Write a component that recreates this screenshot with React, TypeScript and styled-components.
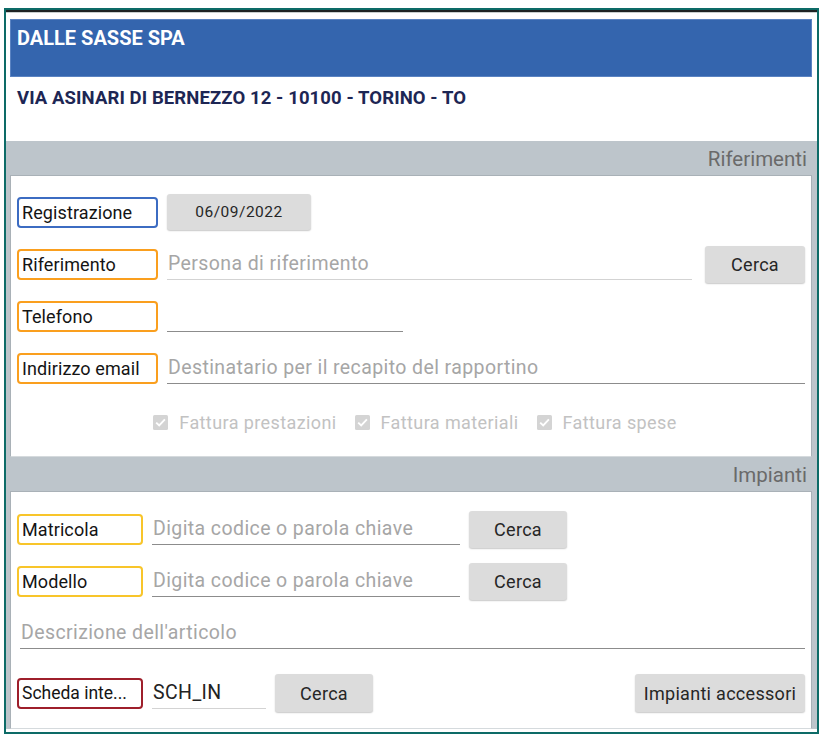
import React from 'react';
import styled, {createGlobalStyle} from "styled-components";

const GlobalStyle = createGlobalStyle`
    html, body {
        margin: 0;
        padding: 0;
        background: #ffffff;
        font-family: Roboto, "Noto Sans", "Liberation Sans", sans-serif;
    }
`;

type Tone = 'blue' | 'orange' | 'yellow' | 'red';

const toneColors: Record<Tone, string> = {
    blue: '#3c6cc2',
    orange: '#fa9f1e',
    yellow: '#f8c52a',
    red: '#9e1f2b',
};

function App() {
    return (
        <>
            <GlobalStyle/>
            <Frame>
                <TopRule/>
                <CompanyBar>DALLE SASSE SPA</CompanyBar>
                <Address>VIA ASINARI DI BERNEZZO 12 - 10100 - TORINO - TO</Address>

                <Section>
                    <SectionTitle>Riferimenti</SectionTitle>
                    <Card $paddingTop={10} $paddingBottom={6}>
                        <Row>
                            <FieldLabel $tone="blue" $width={141}>Registrazione</FieldLabel>
                            <GreyButton $width={144} $height={36} $small>06/09/2022</GreyButton>
                        </Row>
                        <Row>
                            <FieldLabel $tone="orange" $width={141}>Riferimento</FieldLabel>
                            <Input $light placeholder="Persona di riferimento"/>
                            <GreyButton $width={100} $height={37} $gapLeft={13}>Cerca</GreyButton>
                        </Row>
                        <Row>
                            <FieldLabel $tone="orange" $width={141}>Telefono</FieldLabel>
                            <Input $width={236}/>
                        </Row>
                        <Row>
                            <FieldLabel $tone="orange" $width={141}>Indirizzo email</FieldLabel>
                            <Input placeholder="Destinatario per il recapito del rapportino"/>
                        </Row>
                        <CheckRow>
                            <CheckItem><CheckBox/>Fattura prestazioni</CheckItem>
                            <CheckItem><CheckBox/>Fattura materiali</CheckItem>
                            <CheckItem><CheckBox/>Fattura spese</CheckItem>
                        </CheckRow>
                    </Card>
                </Section>

                <Section>
                    <SectionTitle>Impianti</SectionTitle>
                    <Card $paddingTop={11} $paddingBottom={9}>
                        <Row>
                            <FieldLabel $tone="yellow" $width={126}>Matricola</FieldLabel>
                            <Input $width={308} placeholder="Digita codice o parola chiave"/>
                            <GreyButton $width={98} $height={37}>Cerca</GreyButton>
                        </Row>
                        <Row>
                            <FieldLabel $tone="yellow" $width={126}>Modello</FieldLabel>
                            <Input $width={308} placeholder="Digita codice o parola chiave"/>
                            <GreyButton $width={98} $height={37}>Cerca</GreyButton>
                        </Row>
                        <Row $indent={3}>
                            <Input placeholder="Descrizione dell'articolo"/>
                        </Row>
                        <Row $top={8}>
                            <FieldLabel $tone="red" $width={126} $small>Scheda inte...</FieldLabel>
                            <Input $light $width={114} defaultValue="SCH_IN"/>
                            <GreyButton $width={98} $height={38}>Cerca</GreyButton>
                            <Spacer/>
                            <GreyButton $width={170} $height={38}>Impianti accessori</GreyButton>
                        </Row>
                    </Card>
                </Section>
            </Frame>
        </>
    );
}

const Frame = styled.div`
    box-sizing: border-box;
    margin: 8px 0 0 4px;
    width: 815px;
    height: 726px;
    border: 2px solid #0d6b67;
    display: flex;
    flex-direction: column;
    background: #ffffff;
    overflow: hidden;
`;

const TopRule = styled.div`
    height: 2px;
    background: #1e2324;
    border-bottom: 1px solid #c9cfcf;
    margin-bottom: 6px;
`;

const CompanyBar = styled.div`
    box-sizing: border-box;
    margin: 0 5px 0 4px;
    height: 58px;
    background: #3465ae;
    color: #ffffff;
    font-weight: 700;
    font-size: 20px;
    line-height: 24px;
    padding: 6px 0 0 6px;
    border: 1px solid #5a83c2;
`;

const Address = styled.div`
    height: 64px;
    padding: 10px 0 0 11px;
    box-sizing: border-box;
    color: #1d2654;
    font-weight: 700;
    font-size: 18.5px;
    line-height: 22px;
    letter-spacing: 0.1px;
`;

const Section = styled.section`
    background: #bdc5cb;
    padding: 0 5px 0 4px;
    display: flex;
    flex-direction: column;
`;

const SectionTitle = styled.div`
    height: 34px;
    display: flex;
    align-items: center;
    justify-content: flex-end;
    padding: 1px 5px 0 0;
    box-sizing: border-box;
    color: #6a6a6a;
    font-size: 20.5px;
`;

const Card = styled.div<{ $paddingTop: number, $paddingBottom: number }>`
    background: #ffffff;
    border: 1px solid #a9b1b7;
    border-bottom-color: #d5dadd;
    padding: ${(p) => p.$paddingTop}px 6px ${(p) => p.$paddingBottom}px 6px;
    display: flex;
    flex-direction: column;
`;

const Row = styled.div<{ $indent?: number, $top?: number }>`
    height: 52px;
    display: flex;
    align-items: center;
    gap: 9px;
    padding-left: ${(p) => p.$indent ?? 0}px;
    margin-top: ${(p) => p.$top ?? 0}px;
`;

const FieldLabel = styled.div<{ $tone: Tone, $width: number, $small?: boolean }>`
    box-sizing: border-box;
    flex: none;
    width: ${(p) => p.$width}px;
    height: 31px;
    border: 2px solid ${(p) => toneColors[p.$tone]};
    border-radius: 4px;
    display: flex;
    align-items: center;
    padding-left: 3px;
    color: #141414;
    font-size: ${(p) => p.$small ? 17.5 : 18}px;
    letter-spacing: ${(p) => p.$small ? 0 : 0.1}px;
    white-space: nowrap;
    overflow: hidden;
`;

const Input = styled.input<{ $width?: number, $light?: boolean }>`
    box-sizing: border-box;
    ${(p) => p.$width ? `width: ${p.$width}px; flex: none;` : 'flex: 1; min-width: 0;'}
    height: 31px;
    border: none;
    border-bottom: 1.5px solid ${(p) => p.$light ? '#d3d3d3' : '#8c8c8c'};
    outline: none;
    background: transparent;
    padding: 0 1px 1px 1px;
    font-family: Roboto, "Noto Sans", "Liberation Sans", sans-serif;
    font-size: 19.5px;
    letter-spacing: 0.4px;
    color: #222222;

    &::placeholder {
        color: #a6a6a6;
    }
`;

const GreyButton = styled.button<{ $width: number, $height: number, $gapLeft?: number, $small?: boolean }>`
    flex: none;
    width: ${(p) => p.$width}px;
    height: ${(p) => p.$height}px;
    margin-left: ${(p) => p.$gapLeft ? p.$gapLeft - 9 : 0}px;
    border: none;
    border-radius: 3px;
    background: #dcdcdc;
    box-shadow: 0 1px 1.5px rgba(0, 0, 0, 0.22);
    font-family: Roboto, "Noto Sans", "Liberation Sans", sans-serif;
    font-size: ${(p) => p.$small ? 15.5 : 18}px;
    letter-spacing: ${(p) => p.$small ? 0.5 : 0.3}px;
    color: #262626;
    padding: 0;
`;

const Spacer = styled.div`
    flex: 1;
`;

const CheckRow = styled.div`
    height: 56px;
    display: flex;
    align-items: center;
    justify-content: center;
    gap: 18px;
    padding-left: 8px;
    padding-top: 1px;
    box-sizing: border-box;
`;

const CheckItem = styled.label`
    display: flex;
    align-items: center;
    gap: 11px;
    color: #c2c2c2;
    font-size: 18px;
    letter-spacing: 0.4px;
`;

const CheckBox = () => (
    <svg width="15" height="15" viewBox="0 0 15 15">
        <rect x="0" y="0" width="15" height="15" rx="1.5" fill="#d4d4d4"/>
        <path d="M3.2 7.6 L6.2 10.5 L11.9 4.4" fill="none" stroke="#ffffff" strokeWidth="1.9"/>
    </svg>
);

export default App;
